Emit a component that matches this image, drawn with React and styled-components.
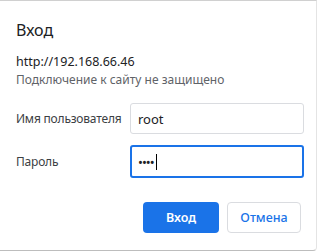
import React from 'react';
import styled, { createGlobalStyle } from 'styled-components';

const Global = createGlobalStyle`
  body {
    margin: 0;
    background: #fff;
    font-family: "Noto Sans", "Open Sans", sans-serif;
    color: #202124;
  }
`;

const Dialog = styled.div`
  box-sizing: border-box;
  width: 317px;
  height: 251px;
  border-top: 1px solid #d0d0d0;
  border-right: 1px solid #e4e4e4;
  border-bottom: 1px solid #bdbdbd;
  border-bottom-right-radius: 4px;
  padding: 17px 15px 0 16px;
`;

const Title = styled.h1`
  margin: 0;
  font-size: 16px;
  font-weight: 400;
  line-height: 24px;
`;

const Url = styled.div`
  margin-top: 11px;
  font-size: 12.5px;
  line-height: 18px;
`;

const Note = styled.div`
  margin-top: 0;
  font-size: 12px;
  line-height: 18px;
  color: #5f6368;
`;

const Form = styled.div`
  margin-top: 14px;
  display: grid;
  grid-template-columns: 114px 174px;
  row-gap: 11px;
  align-items: center;
`;

const Label = styled.label`
  font-size: 12px;
  letter-spacing: -0.2px;
  color: #3c4043;
`;

const Field = styled.div`
  box-sizing: border-box;
  height: ${p => (p.$focused ? 33 : 31)}px;
  border: ${p => (p.$focused ? '2px solid #1a73e8' : '1px solid #dadce0')};
  border-radius: 3px;
  padding: 0 ${p => (p.$focused ? 6 : 7)}px;
  display: flex;
  align-items: center;
  font-size: 13px;
  color: #202124;
`;

const Dots = styled.span`
  font-size: 13px;
  letter-spacing: -1px;
`;

const Caret = styled.span`
  display: inline-block;
  width: 1px;
  height: 16px;
  background: #000;
  margin-left: 2px;
`;

const Actions = styled.div`
  margin-top: 24px;
  display: flex;
  justify-content: flex-end;
  gap: 8px;
`;

const Button = styled.button`
  box-sizing: border-box;
  width: ${p => p.$w}px;
  height: 31px;
  border-radius: 4px;
  font-family: "Noto Sans", "Open Sans", sans-serif;
  font-size: 12.5px;
  font-weight: ${p => (p.$primary ? 600 : 500)};
  background: ${p => (p.$primary ? '#1a73e8' : '#fff')};
  color: ${p => (p.$primary ? '#fff' : '#1a73e8')};
  border: ${p => (p.$primary ? 'none' : '1px solid #dadce0')};
  padding: 0;
`;

export default function App() {
  return (
    <>
      <Global />
      <Dialog>
        <Title>Вход</Title>
        <Url>http://192.168.66.46</Url>
        <Note>Подключение к сайту не защищено</Note>
        <Form>
          <Label>Имя пользователя</Label>
          <Field>root</Field>
          <Label>Пароль</Label>
          <Field $focused>
            <Dots>••••</Dots>
            <Caret />
          </Field>
        </Form>
        <Actions>
          <Button $primary $w={76}>Вход</Button>
          <Button $w={74}>Отмена</Button>
        </Actions>
      </Dialog>
    </>
  );
}
